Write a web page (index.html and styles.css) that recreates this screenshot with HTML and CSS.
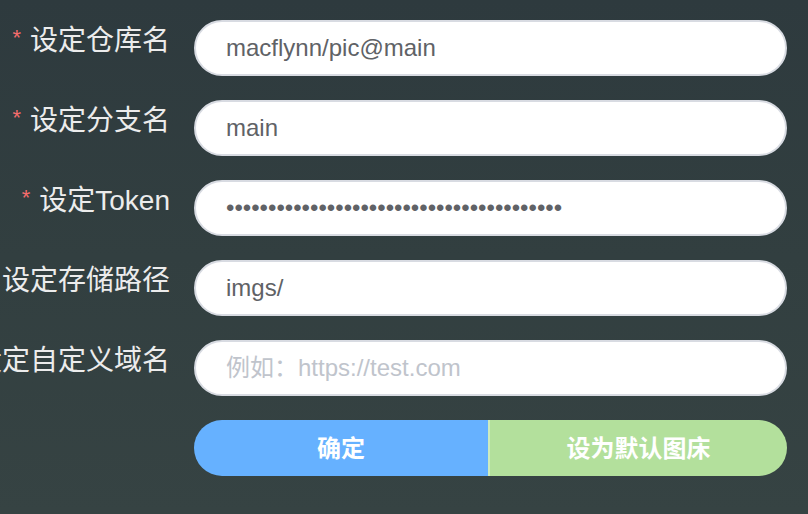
FILE: index.html
```html
<!DOCTYPE html>
<html lang="zh-CN">
<head>
<meta charset="utf-8">
<title>图床设置</title>
<link rel="stylesheet" href="styles.css">
</head>
<body>
<form class="form">
  <div class="row">
    <label class="label required">设定仓库名</label>
    <input class="input" type="text" value="macflynn/pic@main">
  </div>
  <div class="row">
    <label class="label required">设定分支名</label>
    <input class="input" type="text" value="main">
  </div>
  <div class="row">
    <label class="label required">设定Token</label>
    <input class="input" type="password" value="ghp_abcdefghijklmnopqrstuvwxyz0123456789">
  </div>
  <div class="row">
    <label class="label">设定存储路径</label>
    <input class="input" type="text" value="imgs/">
  </div>
  <div class="row">
    <label class="label">设定自定义域名</label>
    <input class="input" type="text" placeholder="例如：https://test.com">
  </div>
  <div class="row">
    <span class="label"></span>
    <div class="btn-group">
      <button type="button" class="btn btn-primary">确定</button>
      <button type="button" class="btn btn-success">设为默认图床</button>
    </div>
  </div>
</form>
</body>
</html>
```
FILE: styles.css
```css
html, body {
  margin: 0;
  height: 100%;
}
body {
  background: linear-gradient(180deg, #2e3a3e 0%, #323f40 50%, #364343 100%);
  font-family: "Liberation Sans", "Noto Sans CJK SC", sans-serif;
  overflow: hidden;
}
.form {
  display: flex;
  flex-direction: column;
  gap: 24px;
  padding: 20px 21px 0 0;
}
.row {
  display: grid;
  grid-template-columns: 170px 1fr;
  column-gap: 24px;
  height: 56px;
}
.label {
  display: flex;
  justify-content: flex-end;
  white-space: nowrap;
  height: 42px;
  line-height: 42px;
  font-size: 28px;
  color: #ececec;
  font-family: "Liberation Sans", "Noto Sans CJK SC", sans-serif;
}
.required::before {
  content: "*";
  color: #f56c6c;
  font-size: 22px;
  line-height: 36px;
  margin-right: 9px;
}
.input {
  box-sizing: border-box;
  width: 100%;
  height: 56px;
  margin: 0;
  border: 2px solid #d8dbe2;
  border-radius: 28px;
  background: #fff;
  padding: 0 30px;
  font-family: "Liberation Sans", "Noto Sans CJK SC", sans-serif;
  font-size: 24px;
  color: #606266;
  outline: none;
}
.input::placeholder {
  color: #c0c4cc;
}
.btn-group {
  display: flex;
  height: 56px;
  border-radius: 28px;
  overflow: hidden;
}
.btn {
  margin: 0;
  border: 0;
  padding: 0 0 3px;
  color: #fff;
  font-family: "Noto Sans CJK SC", sans-serif;
  font-weight: 700;
  font-size: 24px;
  cursor: pointer;
}
.btn-primary {
  flex: 0 0 294px;
  background: #66b1ff;
}
.btn-success {
  flex: 1;
  background: #b3e09c;
  border-left: 2px solid #cdebbd;
}
```
